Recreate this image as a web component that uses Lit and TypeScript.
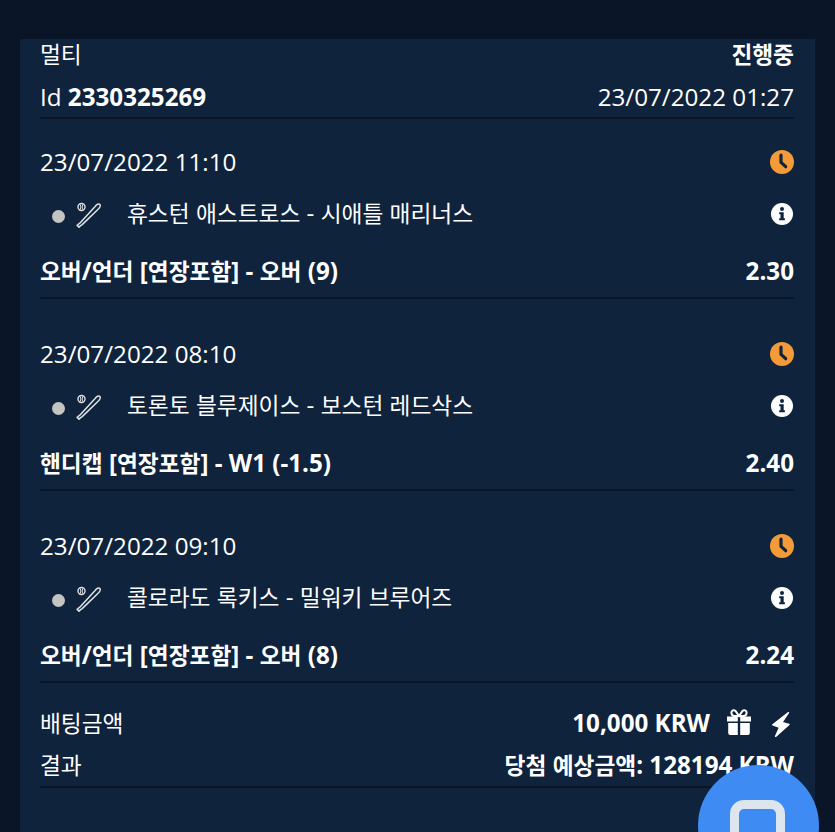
import { LitElement, html, css } from "lit";
import { customElement } from "lit/decorators.js";

const bets = [
  { date: "23/07/2022 11:10", match: "휴스턴 애스트로스 - 시애틀 매리너스", market: "오버/언더 [연장포함] - 오버 (9)", odds: "2.30" },
  { date: "23/07/2022 08:10", match: "토론토 블루제이스 - 보스턴 레드삭스", market: "핸디캡 [연장포함] - W1 (-1.5)", odds: "2.40" },
  { date: "23/07/2022 09:10", match: "콜로라도 록키스 - 밀워키 브루어즈", market: "오버/언더 [연장포함] - 오버 (8)", odds: "2.24" },
];

/* Hangul runs are set slightly smaller than the Latin text around them. */
const ko = (s: string) =>
  s.split(/([\uac00-\ud7a3]+)/).map((p, i) => (i % 2 ? html`<span class="ko">${p}</span>` : p));

const clock = html`<svg class="ic" width="24" height="24" viewBox="0 0 24 24"><circle cx="12" cy="12" r="12" fill="#f29b38"/><path d="M11 5.200V12.300L15.700 16.700" fill="none" stroke="#10233d" stroke-width="3.200" stroke-linecap="round" stroke-linejoin="round"/></svg>`;
const info = html`<svg class="ic" width="22" height="22" viewBox="0 0 22 22"><circle cx="11" cy="11" r="11" fill="#fff"/><circle cx="11" cy="6.100" r="2" fill="#10233d"/><path d="M8.200 9.300h4.500v6h1.200v2H8.200v-2h1.300v-4H8.200z" fill="#10233d"/></svg>`;
const bat = html`<svg width="26" height="26" viewBox="0 0 26 26" fill="none" stroke="#dfe2e6">
  <circle cx="5.500" cy="5" r="3.500" stroke-width="1.400"/><path d="M4.300 2.600q1.200 2.400 0 4.800M6.700 2.600q-1.200 2.400 0 4.800" stroke-width="1"/>
  <path d="M1.200 23.400 3 25.200 4.600 23.600 6.200 22.600 21.600 7.800C24 5.500 25 3.700 23.900 2.500 22.700 1.300 20.800 2.300 18.900 4.700L4.500 20.600 3 21.700Z" stroke-width="1.500" stroke-linejoin="round"/>
</svg>`;
const gift = html`<svg class="ic" width="24" height="26" viewBox="0 0 24 26" fill="#fff"><path d="M0 7.500h10.800v5H0zM13.200 7.500H24v5H13.200zM1.200 14h9.600v12H3.200a2 2 0 0 1-2-2zM13.200 14h9.600v10a2 2 0 0 1-2 2h-7.600z"/><path d="M12 7 8.500 2C7 .4 4.200 1.200 4.400 3.800 4.500 5.800 5.800 7 7.300 7h9.400c1.500 0 2.800-1.200 2.900-3.200.2-2.600-2.600-3.400-4.100-1.800Z" fill="none" stroke="#fff" stroke-width="2"/></svg>`;
const bolt = html`<svg class="ic" width="18" height="25" viewBox="0 0 18 25" fill="#fff"><path d="M16.500.6 .8 12.800l6.800 2.500L3.600 24.400 17 12.400 9.800 10.500z" stroke="#fff" stroke-width="1.400" stroke-linejoin="round"/></svg>`;

@customElement("app-root")
export class AppRoot extends LitElement {
  static styles = css`
    :host { display: block; height: 832px; overflow: hidden; position: relative; background: #0a1627;
      font-family: "Open Sans", "Noto Sans CJK KR", sans-serif; font-size: 24.200px; line-height: 32px; color: #fff; }
    .card { margin-top: 39px; margin-inline: 20px; padding: 0 21px 0 20px; height: 793px; box-sizing: border-box; background: #10233d; }
    .ko { font-size: 22.700px; }
    .row { display: flex; justify-content: space-between; align-items: center; height: 32px; }
    .b { font-weight: 700; }
    .head { padding: 0 0 4px; border-bottom: 2px solid #0a1627; }
    .r1 { height: 30px; }
    .r2 { margin-top: 12px; }
    .bet { padding: 39px 0 10px; border-bottom: 2px solid #0a1627; }
    .first { padding-top: 27px; }
    .match { margin-top: 19px; }
    .left { display: flex; align-items: center; }
    .dot { width: 13px; height: 13px; border-radius: 50%; background: #c4c4c4; margin: 6px 11px 0 12px; }
    .bat { display: flex; margin-right: 25px; margin-top: 3px; }
    .market { margin-top: 26px; font-weight: 700; }
    .ic { display: block; }
    .info { margin: 2px 1px 0 0; }
    .foot { padding-bottom: 5px; border-bottom: 2px solid #0a1627; }
    .f1 { padding-top: 24px; }
    .f2 { margin-top: 10px; }
    .right { display: flex; align-items: center; font-weight: 700; }
    .gift { margin: 0 21px 2px 17px; }
    .bolt { margin: 2px 4px 0 0; }
    .fab { position: absolute; left: 698px; top: 765px; width: 121px; height: 121px; border-radius: 50%; background: #3e8bf3; }
    .fab i { position: absolute; left: 32px; top: 35px; width: 37px; height: 60px; border: 9px solid #dde6ee; border-radius: 14px; }
  `;
  render() {
    return html`
      <div class="card">
        <div class="head">
          <div class="row r1"><span>${ko("멀티")}</span><span class="b">${ko("진행중")}</span></div>
          <div class="row r2"><span>Id <span class="b">2330325269</span></span><span>23/07/2022 01:27</span></div>
        </div>
        ${bets.map((b, i) => html`
          <div class="bet ${i === 0 ? "first" : ""}">
            <div class="row"><span>${b.date}</span>${clock}</div>
            <div class="row match">
              <div class="left"><span class="dot"></span><span class="bat">${bat}</span><span>${ko(b.match)}</span></div>
              <span class="info">${info}</span>
            </div>
            <div class="row market"><span>${ko(b.market)}</span><span>${b.odds}</span></div>
          </div>`)}
        <div class="foot f1">
          <div class="row"><span>${ko("배팅금액")}</span>
            <div class="right"><span>10,000 KRW</span><span class="gift">${gift}</span><span class="bolt">${bolt}</span></div></div>
          <div class="row f2"><span>${ko("결과")}</span><span class="b">${ko("당첨 예상금액")}: 128194 KRW</span></div>
        </div>
      </div>
      <div class="fab"><i></i></div>
    `;
  }
}
